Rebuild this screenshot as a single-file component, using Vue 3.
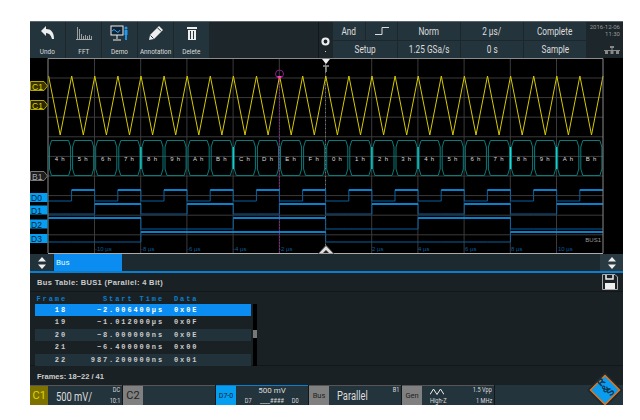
<script setup>
const left = 48.5
const step = 23.1
const xAt = (k) => +(left + k * step).toFixed(1)

// 24 bus cells, the counter starts at 4
const cells = Array.from({ length: 24 }, (_, k) => {
  const value = (4 + k) & 15
  const a = xAt(k)
  const b = xAt(k + 1)
  return {
    k,
    label: value.toString(16).toUpperCase() + " h",
    cx: (a + b) / 2,
    path: `M${a + 3} 140.5H${b - 3}L${b - 1} 147V169L${b - 3} 175.5H${a + 3}L${a + 1} 169V147Z`,
  }
})
const brightEdges = [4, 8, 14, 16, 20, 22].map(xAt)

const hGrid = [78, 97.6, 117.2, 136.8, 156.4, 176, 195.6, 215.2, 234.8]
const vGrid = [94.5, 140.7, 186.9, 233.1, 279.3, 325.5, 371.7, 417.9, 464.1, 510.3, 556.5]

const axis = [
  { x: 95, t: "-10 µs" }, { x: 141, t: "-8 µs" }, { x: 187, t: "-6 µs" }, { x: 233, t: "-4 µs" }, { x: 279, t: "-2 µs" },
  { x: 372, t: "2 µs" }, { x: 418, t: "4 µs" }, { x: 465, t: "6 µs" }, { x: 511, t: "8 µs" }, { x: 558, t: "10 µs" },
]

let tri = ""
for (let k = 0; k < 24; k++) {
  tri += `${k ? "L" : "M"}${(48.6 + k * 23.1).toFixed(1)} 76L${(60.2 + k * 23.1).toFixed(1)} 135`
}
tri += "L603 76"

const channels = [
  { bit: 0, hi: 190, lo: 201 },
  { bit: 1, hi: 204, lo: 214 },
  { bit: 2, hi: 218, lo: 229 },
  { bit: 3, hi: 232, lo: 242 },
].map((c) => {
  let line = ""
  let high = ""
  for (let k = 0; k < 24; k++) {
    const on = (((4 + k) >> c.bit) & 1) === 1
    const y = on ? c.hi : c.lo
    line += `${k ? "L" : "M"}${xAt(k)} ${y}L${xAt(k + 1)} ${y}`
    if (on) high += `M${xAt(k)} ${y}L${xAt(k + 1)} ${y}`
  }
  return { ...c, line, high }
})

const tabs = [
  { name: "C1", y: 86, stroke: "#b3a500", fill: "#3a3500", color: "#e0d400" },
  { name: "C1", y: 105, stroke: "#b3a500", fill: "#2a2600", color: "#e0d400" },
  { name: "B1", y: 176, stroke: "#777", fill: "#1c1c1c", color: "#aaa" },
]
const digital = [
  { name: "D0", y: 197.5 },
  { name: "D1", y: 210 },
  { name: "D2", y: 224 },
  { name: "D3", y: 238.5 },
]

const rows = [
  { frame: 18, start: "−2.006400µs", data: "0x0E", cls: "sel" },
  { frame: 19, start: "−1.012000µs", data: "0x0F", cls: "" },
  { frame: 20, start: "−8.000000ns", data: "0x0E", cls: "alt" },
  { frame: 21, start: "−6.400000ns", data: "0x00", cls: "" },
  { frame: 22, start: "987.200000ns", data: "0x01", cls: "alt" },
]
</script>

<template>
  <div class="screen">
    <header class="toolbar">
      <button class="tool">
        <svg width="16" height="16" viewBox="0 0 16 16"><path d="M1 6 6 1v3c5 0 8 3 8 10h-2c-1-4-3-6-6-6v3z" fill="#eee" /></svg>
        <span class="cap">Undo</span>
      </button>
      <button class="tool">
        <svg width="18" height="16" viewBox="0 0 18 16"><path d="M2.500 2v12M4.500 4v10M6.500 9v5M8.500 11v3M10.500 10v4M12.500 11v3M14.500 10v4M16.500 11v3" stroke="#ccc" stroke-width=".7" fill="none" /><path d="M1 14.500h16" stroke="#aaa" /></svg>
        <span class="cap">FFT</span>
      </button>
      <button class="tool">
        <svg width="20" height="17" viewBox="0 0 20 17"><rect x="1" y="1" width="12" height="9" fill="#123" stroke="#eee" /><path d="M2 6q2-3 4 0t4-1" stroke="#2ea6ff" fill="none" /><path d="M7 10v4M3 15h8" stroke="#eee" /><circle cx="16" cy="3" r="1.500" fill="#1e9bf0" /><path d="M14.500 5h3v5h-.6v5h-1.800v-5h-.6z" fill="#1e9bf0" /></svg>
        <span class="cap">Demo</span>
      </button>
      <button class="tool">
        <svg width="16" height="16" viewBox="0 0 16 16"><path d="M11 1 15 5 6 14 1 15 2 10z" fill="#eee" /><path d="M9.500 2.800l3.600 3.600M2.500 10.500l3 3" stroke="#24343c" /></svg>
        <span class="cap">Annotation</span>
      </button>
      <button class="tool">
        <svg width="14" height="16" viewBox="0 0 14 16"><path d="M2 2h10v2H2zM3 5h8v10H3z" fill="#eee" /><path d="M5.500 6v8M8.500 6v8" stroke="#24343c" /></svg>
        <span class="cap">Delete</span>
      </button>
      <div class="spacer"></div>
      <div class="gear">
        <svg width="9" height="9" viewBox="0 0 9 9"><circle cx="4.500" cy="4.500" r="3" fill="none" stroke="#eee" stroke-width="2.200" /></svg>
        <i class="dot"></i>
      </div>
      <div class="settings">
        <div class="cell and"><span>And</span></div>
        <div class="cell edge">
          <svg width="14" height="8" viewBox="0 0 14 8"><path d="M0 7.500h7V.5h7" stroke="#ddd" fill="none" /></svg>
        </div>
        <div class="cell"><span>Norm</span></div>
        <div class="cell"><span>2 µs/</span></div>
        <div class="cell"><span>Complete</span></div>
        <div class="cell wide"><span>Setup</span></div>
        <div class="cell"><span>1.25 GSa/s</span></div>
        <div class="cell"><span>0 s</span></div>
        <div class="cell"><span>Sample</span></div>
      </div>
      <div class="clock">
        <span>2016-12-06</span>
        <span>11:30</span>
        <svg class="net" width="16" height="8" viewBox="0 0 16 8"><path d="M8 1.500v3M0 4.500h16" stroke="#888" /><path d="M6 0h4v2H6zM1 5h3v3H1zM6.500 5h3v3h-3zM12 5h3v3h-3z" fill="#888" /></svg>
      </div>
    </header>

    <section class="scope">
      <svg class="plot" width="593" height="196" viewBox="30 58 593 196">
        <g stroke="#3b3b3b" fill="none">
          <path v-for="y in hGrid" :key="y" :d="`M48 ${y}H603`" />
          <path v-for="x in vGrid" :key="x" :d="`M${x} 58V253`" />
        </g>
        <path d="M279.500 80V253" stroke="#7a2a7a" stroke-dasharray="2 1" fill="none" />
        <path d="M325.500 60V253" stroke="#777" stroke-dasharray="1 3" fill="none" />

        <path :d="tri" stroke="#d6ca00" fill="none" />

        <g fill="none" stroke="#0a7a7a">
          <path v-for="c in cells" :key="c.k" :d="c.path" />
        </g>
        <path v-for="x in brightEdges" :key="x" :d="`M${x} 147V169`" stroke="#18dcdc" stroke-width="1.200" fill="none" />
        <text v-for="c in cells" :key="'t' + c.k" class="hex" :x="c.cx" y="160.500" text-anchor="middle">{{ c.label }}</text>

        <g v-for="c in channels" :key="c.bit" fill="none">
          <path :d="c.line" stroke="#0a5f9c" />
          <path :d="c.high" stroke="#0c9cf5" stroke-width="1.600" />
        </g>

        <text v-for="a in axis" :key="a.t" class="axis" :x="a.x" y="251">{{ a.t }}</text>
        <text class="busname" x="601" y="242" text-anchor="end">BUS1</text>

        <path d="M48 253V58.500H603V253" stroke="#8a8a8a" fill="none" />
        <path d="M48 253.500H603" stroke="#aaa" fill="none" />

        <!-- cursor marker -->
        <circle cx="279.500" cy="74" r="4" fill="none" stroke="#8a1f8a" />
        <path d="M277 76h5l-2.500 3.500z" fill="#ff3fc0" />

        <!-- trigger position -->
        <path d="M322 59h8l-4 5z" fill="#eee" />
        <path d="M323 66h6M326 66v6" stroke="#999" stroke-width="1.500" fill="none" />
        <path d="M318 254 326 245.500 334 254z" fill="#ddd" stroke="#666" />
        <path d="M323 253 326 250 329 253z" fill="#222" />

        <g v-for="(t, i) in tabs" :key="i">
          <path :d="`M30.500 ${t.y - 4.500}H44L47.500 ${t.y}L44 ${t.y + 4.500}H30.500Z`" :fill="t.fill" :stroke="t.stroke" />
          <text class="tabname" x="32" :y="t.y + 3.500" :fill="t.color">{{ t.name }}</text>
        </g>
        <g v-for="d in digital" :key="d.name">
          <rect x="30" :y="d.y - 4.500" width="17.500" height="9" fill="#069ef0" />
          <text class="tabname dark" x="31" :y="d.y + 3.500">{{ d.name }}</text>
        </g>
      </svg>
    </section>

    <nav class="tabbar">
      <div class="updown">
        <svg width="8" height="12" viewBox="0 0 8 12"><path d="M4 0 8 4.500H0zM4 12 0 7.500H8z" fill="#eee" /></svg>
      </div>
      <div class="tab">Bus</div>
      <div class="spacer"></div>
      <div class="updown end">
        <svg width="8" height="12" viewBox="0 0 8 12"><path d="M4 0 8 4.500H0zM4 12 0 7.500H8z" fill="#eee" /></svg>
      </div>
    </nav>

    <section class="panel">
      <div class="panel-title">
        <span>Bus Table: BUS1 (Parallel: 4 Bit)</span>
        <svg class="save" width="16" height="16" viewBox="0 0 16 16"><path d="M.5.500H13L15.500 3V15.500H.5Z" fill="none" stroke="#aaa" /><path d="M3 9h10v6H3z" fill="#eee" /><path d="M4 1v4h7V1" fill="none" stroke="#eee" stroke-width="1.500" /></svg>
      </div>
      <div class="table-wrap">
        <div class="table">
          <div class="row head">
            <span class="num">Frame</span>
            <span class="num">Start Time</span>
            <span>Data</span>
          </div>
          <div v-for="r in rows" :key="r.frame" class="row" :class="r.cls">
            <span class="num">{{ r.frame }}</span>
            <span class="num">{{ r.start }}</span>
            <span>{{ r.data }}</span>
          </div>
        </div>
        <div class="scrollbar"><i class="thumb"></i></div>
      </div>
      <div class="panel-foot">Frames: 18−22 / 41</div>
    </section>

    <footer class="status">
      <div class="chan">
        <div class="chan-tag olive">C1</div>
        <div class="chan-body">
          <span class="big">500 mV/</span>
          <span class="side"><b>DC</b><b>10:1</b></span>
        </div>
      </div>
      <div class="chan">
        <div class="chan-tag">C2</div>
        <div class="chan-body"></div>
      </div>
      <div class="chan blue">
        <div class="chan-tag cyan">D7-0</div>
        <div class="chan-body stack">
          <span>500 mV</span>
          <span class="bits"><b>D7</b><b>____####</b><b>D0</b></span>
        </div>
      </div>
      <div class="chan">
        <div class="chan-tag small">Bus</div>
        <div class="chan-body">
          <span class="big mid">Parallel</span>
          <span class="side"><b>B1</b></span>
        </div>
      </div>
      <div class="chan">
        <div class="chan-tag small">Gen</div>
        <div class="chan-body gen">
          <div class="gen-left">
            <svg width="14" height="7" viewBox="0 0 14 7"><path d="M0 6.500 3.500 1 7 6.500 10.500 1 14 6.500" fill="none" stroke="#eee" /></svg>
            <b>High-Z</b>
          </div>
          <span class="side"><b>1.5 Vpp</b><b>1 MHz</b></span>
        </div>
      </div>
      <div class="chan-body rest"></div>
    </footer>
    <svg class="logo" width="36" height="36" viewBox="0 0 36 36">
      <path d="M18 0 36 18 18 36 0 18Z" fill="#1c2a30" />
      <path d="M18 3.500 32.500 18 18 32.500 3.500 18Z" fill="#0a9cf0" stroke="#e0761c" stroke-width="1.500" />
      <text class="logotext" x="14" y="15" transform="rotate(-45 14 15)">R</text>
      <text class="logotext" x="15.500" y="20.500" transform="rotate(-45 18 18)">&amp;</text>
      <text class="logotext" x="21" y="25" transform="rotate(-45 22 22)">S</text>
    </svg>
  </div>
</template>

<style>
html,
body {
  background: #fff;
}
</style>

<style scoped>
.screen {
  position: relative;
  width: 593px;
  height: 384px;
  margin: 21px 0 0 30px;
  display: flex;
  flex-direction: column;
  overflow: hidden;
  font-family: "Roboto", "Liberation Sans", sans-serif;
  color: #ddd;
  background: #1a2327;
}
.toolbar {
  height: 37px;
  display: flex;
  gap: 1px;
  background: #1c262b;
  border-top: 1px solid #5a666c;
  box-sizing: border-box;
}
.tool {
  width: 35px;
  margin: 0;
  padding: 3px 0 0;
  border: 0;
  background: #24343c;
  display: flex;
  flex-direction: column;
  align-items: center;
  justify-content: space-between;
  font: inherit;
  color: #ddd;
}
.cap {
  font-size: 8px;
  line-height: 12px;
  white-space: nowrap;
  transform: scaleX(0.8);
}
.spacer {
  flex: 1;
}
.gear {
  width: 14px;
  display: flex;
  flex-direction: column;
  align-items: center;
  padding-top: 15px;
  border-left: 1px solid #11181b;
  box-sizing: border-box;
  background: #1c262b;
}
.dot {
  width: 1px;
  height: 1px;
  margin-top: 5px;
  background: #ccc;
}
.settings {
  width: 252px;
  display: grid;
  grid-template-columns: 32px 31px 62px 62px 62px;
  grid-template-rows: 18px 17px;
  gap: 1px;
}
.cell {
  background: #24343c;
  font-size: 11px;
  display: flex;
  align-items: center;
  justify-content: center;
  white-space: nowrap;
}
.cell span {
  transform: scaleX(0.75);
}
.wide {
  grid-column: span 2;
}
.clock {
  width: 37px;
  padding: 2px 3px 0 0;
  box-sizing: border-box;
  display: flex;
  flex-direction: column;
  align-items: flex-end;
  font-size: 6px;
  line-height: 6.500px;
  color: #999;
}
.net {
  margin-top: 9px;
}
.scope {
  height: 196px;
  background: #000;
}
.plot {
  display: block;
}
.hex {
  font: 6px "Liberation Sans", sans-serif;
  fill: #ddd;
  letter-spacing: 0.8px;
}
.axis {
  font: 6px "Liberation Sans", sans-serif;
  fill: #0a5f9c;
}
.busname {
  font: 6px "Liberation Sans", sans-serif;
  fill: #999;
}
.tabname {
  font: 8.500px "Liberation Sans", sans-serif;
}
.dark {
  fill: #0a2433;
}
.tabbar {
  height: 19px;
  display: flex;
  background: #1c2a30;
  border-bottom: 2px solid #0a7fd0;
  box-sizing: border-box;
}
.updown {
  width: 23px;
  display: flex;
  align-items: center;
  justify-content: center;
  background: #22323a;
}
.updown.end {
  background: #2a3a42;
}
.tab {
  width: 68px;
  margin-left: 1px;
  padding-left: 2px;
  box-sizing: border-box;
  background: #0a8cf0;
  font-size: 8px;
  line-height: 17px;
  color: #dff;
}
.panel {
  flex: 1;
  display: flex;
  flex-direction: column;
  background: #192125;
}
.panel-title {
  position: relative;
  height: 19px;
  padding-left: 7px;
  font: bold 7.500px/19px "Liberation Sans", sans-serif;
  letter-spacing: 0.35px;
  color: #ccc;
  border-bottom: 1px solid #11181b;
  box-sizing: border-box;
}
.save {
  position: absolute;
  right: 5px;
  top: 1px;
}
.table-wrap {
  height: 74px;
  padding: 2px 0 0 5px;
  display: flex;
  gap: 2px;
  box-sizing: border-box;
  border-bottom: 1px solid #11181b;
}
.table {
  width: 216px;
  font: bold 7px/12.400px "Liberation Mono", monospace;
  letter-spacing: 1.900px;
  color: #ccc;
}
.row {
  height: 12.400px;
  display: grid;
  grid-template-columns: 32px 87px 1fr;
  column-gap: 10px;
}
.num {
  text-align: right;
  white-space: nowrap;
}
.head {
  height: 10px;
  line-height: 10px;
  color: #0a7fd0;
}
.sel {
  background: #0a8cf0;
  color: #fff;
}
.alt {
  background: #22323a;
}
.scrollbar {
  position: relative;
  width: 4px;
  height: 62px;
  margin-top: 10px;
  background: #000;
}
.thumb {
  display: block;
  width: 4px;
  height: 8px;
  margin-top: 26px;
  background: #777;
}
.panel-foot {
  height: 19px;
  padding-left: 7px;
  font: bold 7.500px/21px "Liberation Sans", sans-serif;
  color: #ccc;
}
.status {
  height: 21px;
  display: flex;
  gap: 1px;
  background: #11181b;
}
.chan {
  width: 92px;
  display: flex;
  border-top: 1px solid #555;
  box-sizing: border-box;
}
.chan.blue {
  border-top-color: #0a7fd0;
}
.chan-tag {
  width: 20px;
  background: #808080;
  color: #222;
  font-size: 11px;
  text-align: center;
  line-height: 20px;
}
.chan-tag.olive {
  background: #7d7200;
  color: #e0d400;
}
.chan-tag.cyan {
  background: #069ef0;
  font-size: 7px;
  color: #0a2433;
}
.chan-tag.small {
  font-size: 7.500px;
}
.chan-body {
  flex: 1;
  padding: 0 2px 0 8px;
  display: flex;
  align-items: center;
  justify-content: space-between;
  background: #24343c;
  box-sizing: border-box;
  white-space: nowrap;
}
.big {
  font-size: 13px;
  transform: scaleX(0.72);
  transform-origin: left center;
}
.mid {
  font-size: 12px;
  transform: scaleX(0.78);
}
.side {
  display: flex;
  flex-direction: column;
  align-self: stretch;
  justify-content: space-between;
  align-items: flex-end;
  font-size: 7px;
  line-height: 9px;
}
.side b,
.gen-left b,
.bits b {
  font-weight: normal;
  transform: scaleX(0.8);
}
.side b {
  transform-origin: right center;
}
.gen-left b {
  transform-origin: left center;
}
.stack {
  flex-direction: column;
  justify-content: flex-start;
  padding: 0 8px;
  font-size: 8px;
  line-height: 10px;
}
.bits {
  align-self: stretch;
  display: flex;
  justify-content: space-between;
  font-size: 7px;
}
.gen-left {
  display: flex;
  flex-direction: column;
  gap: 2px;
  font-size: 7px;
  line-height: 8px;
}
.rest {
  flex: 1;
}
.logo {
  position: absolute;
  right: 0;
  bottom: -3px;
}
.logotext {
  font: bold 10px "Liberation Sans", sans-serif;
  fill: #12324a;
}
</style>
